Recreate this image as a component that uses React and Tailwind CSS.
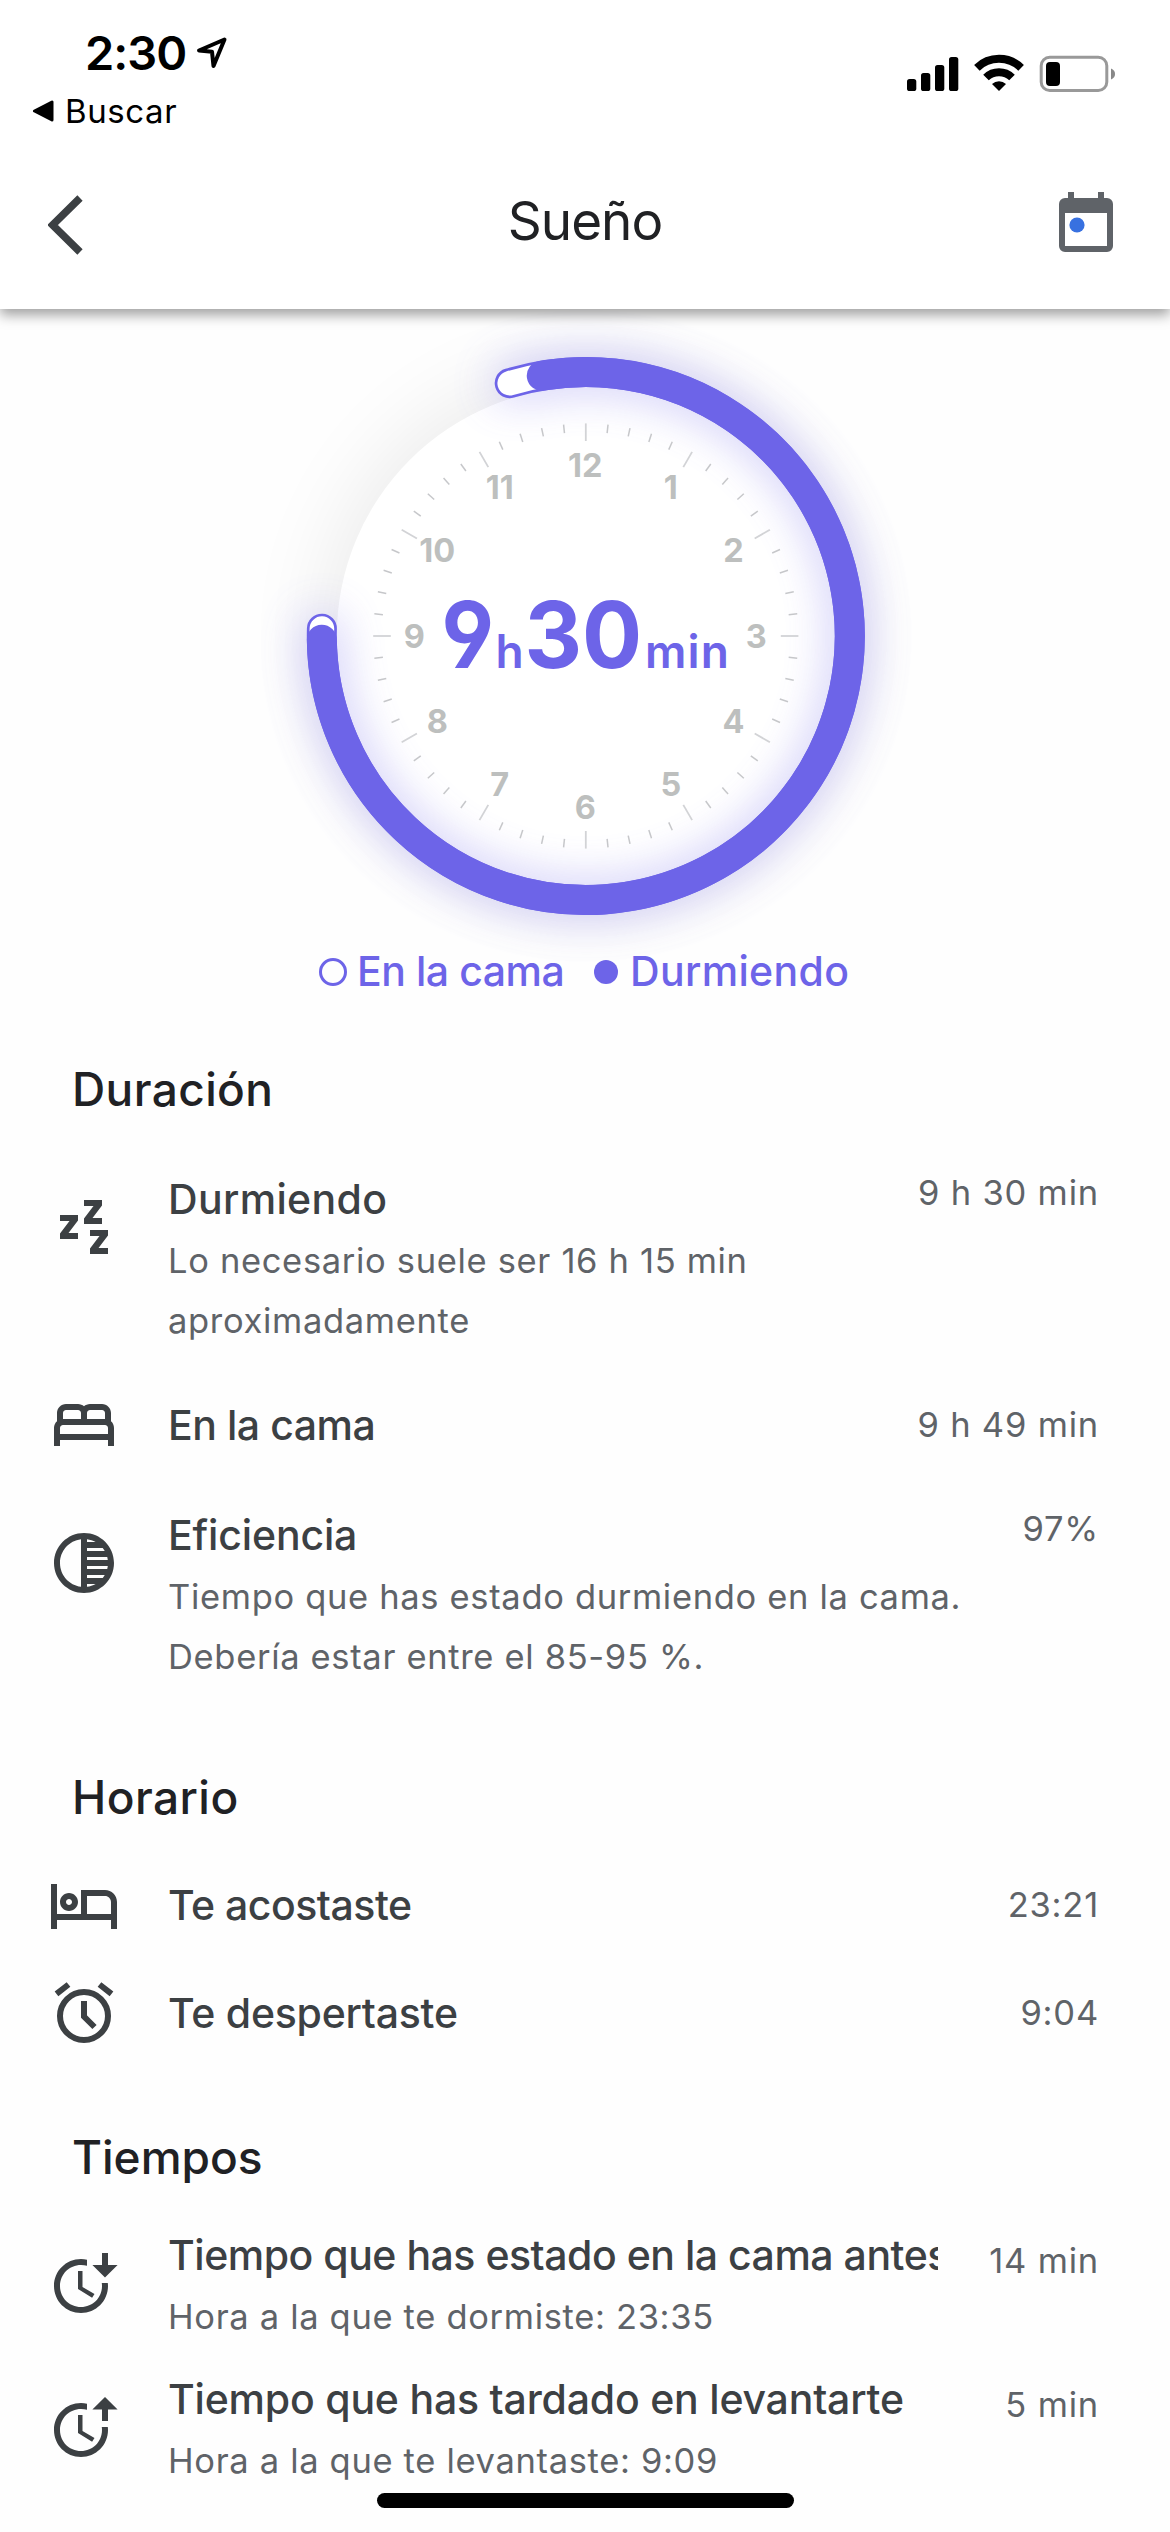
import React from "react";
import { MdOutlineBed, MdTonality, MdOutlineHotel } from "react-icons/md";

const PURPLE = "#6d64e8";
const CX = 585.8;
const CY = 636;

const point = (deg, r) => {
  const a = (deg * Math.PI) / 180;
  return [CX + r * Math.sin(a), CY - r * Math.cos(a)];
};

const arc = (from, to, r) => {
  const [x1, y1] = point(from, r);
  const [x2, y2] = point(to, r);
  return `M${x1} ${y1}A${r} ${r} 0 1 1 ${x2} ${y2}`;
};

const IN_BED = arc(-16.75, 271.6, 264);
const ASLEEP = arc(-9.6, 269.2, 264);

function StatusBar() {
  return (
    <div className="flex h-[131px] justify-between pt-[29px]">
      <div>
        <div className="flex h-12 items-center pl-[85px]">
          <span className="text-[47px] leading-[48px] font-semibold tracking-[-1px]">2:30</span>
          <svg viewBox="0 0 34 36" className="ml-[8px] h-9 w-[34px]">
            <path d="M30.5 4.5 5 15.5l13 1.2 1.5 14.3Z" fill="none" stroke="#000" strokeWidth="4" strokeLinejoin="round" />
          </svg>
        </div>
        <div className="mt-[14px] flex h-10 items-center pl-[32px]">
          <svg viewBox="0 0 22 22" className="h-[22px] w-[22px]">
            <path d="M20 2v18L2.5 11Z" fill="#000" stroke="#000" strokeWidth="3" strokeLinejoin="round" />
          </svg>
          <span className="ml-[11px] text-[33px] leading-10 tracking-[0.6px]">Buscar</span>
        </div>
      </div>
      <svg viewBox="900 50 220 48" className="mt-[21px] mr-[50px] h-12 w-[220px]">
        <rect x="907" y="79" width="9.3" height="12" rx="2.6" />
        <rect x="921" y="73" width="9.3" height="18" rx="2.6" />
        <rect x="935" y="65" width="9.3" height="26" rx="2.6" />
        <rect x="949" y="57" width="9.3" height="34" rx="2.6" />
        <path d="M976.9 67.8a31.7 31.7 0 0 1 44.2 0" fill="none" stroke="#000" strokeWidth="8" />
        <path d="M986 77.5a18.6 18.6 0 0 1 26 0" fill="none" stroke="#000" strokeWidth="8" />
        <path d="M992 84a10.5 10.5 0 0 1 14 0l-7 7Z" />
        <rect x="1041.2" y="57.2" width="65.6" height="33.3" rx="8.5" fill="none" stroke="#999" strokeWidth="3" />
        <rect x="1046" y="62" width="14" height="24" rx="4" />
        <path d="M1111 68.5c5.4 2 5.4 9 0 11Z" fill="#888" />
      </svg>
    </div>
  );
}

function Header() {
  return (
    <header className="relative z-10 h-[309px] bg-white shadow-[0_6px_12px_rgba(0,0,0,0.37)]">
      <StatusBar />
      <div className="grid grid-cols-3 items-start">
        <svg viewBox="0 0 36 60" className="mt-[64px] ml-[48px] h-[60px] w-9">
          <path d="M32 3 4.5 30 32 57" fill="none" stroke="#3c4043" strokeWidth="7.5" />
        </svg>
        <h1 className="mt-[58px] text-center text-[53px] leading-[64px] tracking-[-1px] text-[#202124]">Sueño</h1>
        <svg viewBox="0 0 54 60" className="mt-[61px] mr-[57px] h-[60px] w-[54px] justify-self-end">
          <path
            fillRule="evenodd"
            d="M9 0h6v6h24V0h6v6h3a6 6 0 0 1 6 6v42a6 6 0 0 1-6 6H6a6 6 0 0 1-6-6V12a6 6 0 0 1 6-6h3ZM6 21v33h42V21Z"
            fill="#5f6368"
          />
          <circle cx="18" cy="33" r="7.6" fill="#3871e0" />
        </svg>
      </div>
    </header>
  );
}

function Dial() {
  return (
    <svg viewBox="0 309 1170 638" className="block h-[638px] w-full overflow-visible">
      <defs>
        <filter id="soft" filterUnits="userSpaceOnUse" x="0" y="0" width="1170" height="1300">
          <feGaussianBlur stdDeviation="42" />
        </filter>
        <filter id="glow" filterUnits="userSpaceOnUse" x="0" y="0" width="1170" height="1300">
          <feGaussianBlur stdDeviation="23" />
        </filter>
      </defs>
      <circle cx={CX} cy={CY} r="262" fill="#000" opacity="0.075" filter="url(#soft)" />
      <circle cx={CX} cy={CY} r="249" fill="#fff" />
      <path d={IN_BED} fill="none" stroke={PURPLE} strokeWidth="30" strokeLinecap="round" opacity="0.4" filter="url(#glow)" />
      <path d={IN_BED} fill="none" stroke={PURPLE} strokeWidth="30" strokeLinecap="round" />
      <path d={IN_BED} fill="none" stroke="#fff" strokeWidth="24.6" strokeLinecap="round" />
      <path d={ASLEEP} fill="none" stroke={PURPLE} strokeWidth="30" strokeLinecap="round" />
      {Array.from({ length: 60 }, (_, i) => {
        const major = i % 5 === 0;
        const [x1, y1] = point(i * 6, 212.6);
        const [x2, y2] = point(i * 6, major ? 195 : 204);
        return <line key={i} x1={x1} y1={y1} x2={x2} y2={y2} stroke={major ? "#d2d3d6" : "#c6c7ca"} strokeWidth={major ? 1.8 : 1.5} />;
      })}
      {Array.from({ length: 12 }, (_, i) => {
        const [x, y] = point((i + 1) * 30, 171);
        return (
          <text key={i} x={x - 0.5} y={y + 11.5} textAnchor="middle" fill="#bdbfbe" className="font-[Inter] text-[32.5px] font-bold">
            {i + 1}
          </text>
        );
      })}
      <g fill={PURPLE} className="font-[Inter] font-semibold [font-feature-settings:'cv04']">
        <text transform="translate(441.5 667.5) scale(0.93 1)" className="text-[92px] font-bold">9</text>
        <text x="495.5" y="667.5" className="text-[46px]">h</text>
        <text transform="translate(524.5 667.5) scale(0.97 1)" className="text-[92px] font-bold">30</text>
        <text x="645" y="667.5" className="text-[46px] tracking-[1.1px]">min</text>
      </g>
    </svg>
  );
}

function Legend() {
  return (
    <div className="relative flex items-center pl-[319px] text-[41px] leading-[48px] font-medium text-[#6d64e8]">
      <span className="mt-[2px] size-[28px] rounded-full border-[3px] border-[#6d64e8]" />
      <span className="ml-[10px] w-[237px] tracking-[-0.45px]">En la cama</span>
      <span className="mt-[2px] size-[24px] rounded-full bg-[#6d64e8]" />
      <span className="ml-[12px] tracking-[0.35px]">Durmiendo</span>
    </div>
  );
}

function SleepIcon() {
  return (
    <svg viewBox="0 0 72 72" className="size-[72px]" fill="#3c4043">
      <path id="zed" d="M12 24h18v5.500l-9.500 12.500H30v6H12v-5.500L21.500 30H12z" />
      <use href="#zed" x="24" y="-15" />
      <use href="#zed" x="30" y="15" />
    </svg>
  );
}

function AlarmIcon() {
  return (
    <svg viewBox="0 0 72 72" className="size-[72px]" fill="none" stroke="#3c4043" strokeWidth="6">
      <circle cx="36" cy="39" r="24" />
      <path d="M36 24v15.500l10.500 10.500M8.500 16.800 20.500 7.500M63.500 16.800 51.500 7.500" />
    </svg>
  );
}

function ClockArrowIcon({ up }) {
  return (
    <svg viewBox="0 0 24 24" className="size-[72px] overflow-visible" fill="#3c4043">
      <path d="M10 8v6l4.700 2.900.8-1.200-4-2.400V8z" />
      <path d="M17.920 12c.05.330.08.660.08 1 0 3.900-3.100 7-7 7s-7-3.100-7-7 3.100-7 7-7c.7 0 1.370.1 2 .290V4.230c-.640-.150-1.310-.230-2-.230-5 0-9 4-9 9s4 9 9 9 9-4 9-9c0-.340-.020-.670-.060-1z" />
      <path d={up ? "M19 2l4.200 4.200H20V10h-2V6.200h-3.200z" : "M18 2h2v4h3.200L19 10.200 14.800 6H18z"} />
    </svg>
  );
}

function Heading({ children, className }) {
  return <h2 className={`pl-[72px] text-[46px] leading-[56px] font-medium text-[#202124] ${className}`}>{children}</h2>;
}

const VALUE = "shrink-0 text-right text-[34.5px] leading-[60px] tracking-[0.8px] text-[#5f6368]";
const TITLE = "overflow-hidden text-[41px] leading-[50px] font-medium whitespace-nowrap text-[#3c4043]";
const SUB = "mt-[7px] text-[34.5px] leading-[60px] tracking-[0.67px] text-[#5f6368]";

function SimpleRow({ icon, title, value, tracking, className }) {
  return (
    <div className={`flex h-[72px] items-center pr-[71px] pl-[48px] ${className}`}>
      {icon}
      <span className={`ml-[48px] flex-1 ${TITLE} ${tracking}`}>{title}</span>
      <span className={VALUE}>{value}</span>
    </div>
  );
}

function DetailRow({ icon, title, sub, value, className }) {
  return (
    <div className={`flex items-start pr-[71px] pl-[48px] ${className}`}>
      <div className="pt-[28px]">{icon}</div>
      <div className="ml-[48px] w-[800px] pt-[11px]">
        <div className={TITLE}>{title}</div>
        <p className={SUB}>{sub}</p>
      </div>
      <span className={`ml-auto ${VALUE}`}>{value}</span>
    </div>
  );
}

function TimeRow({ icon, title, sub, value, tracking, className }) {
  return (
    <div className={`flex items-start pr-[71px] pl-[48px] ${className}`}>
      <div className="pt-[17px]">{icon}</div>
      <div className="ml-[48px] w-[770px]">
        <div className={`${TITLE} ${tracking}`}>{title}</div>
        <p className={SUB}>{sub}</p>
      </div>
      <span className={`ml-auto pt-[1px] ${VALUE}`}>{value}</span>
    </div>
  );
}

export default function App() {
  return (
    <div className="flex h-[2532px] w-[1170px] flex-col overflow-hidden bg-[#fefefe] font-[Inter,sans-serif] text-black">
      <Header />
      <main>
        <Dial />
        <Legend />

        <Heading className="mt-[66px] tracking-[0.4px]">Duración</Heading>
        <DetailRow
          className="mt-[46px] tracking-[0.35px]"
          icon={<SleepIcon />}
          title="Durmiendo"
          sub="Lo necesario suele ser 16 h 15 min aproximadamente"
          value="9 h 30 min"
        />
        <SimpleRow
          className="mt-[38px]"
          icon={<MdOutlineBed className="size-[72px] text-[#3c4043]" />}
          title="En la cama"
          tracking="tracking-[-0.45px]"
          value="9 h 49 min"
        />
        <DetailRow
          className="mt-[38px] tracking-[-0.15px]"
          icon={<MdTonality className="size-[72px] text-[#3c4043]" />}
          title="Eficiencia"
          sub="Tiempo que has estado durmiendo en la cama. Debería estar entre el 85-95 %."
          value="97%"
        />

        <Heading className="mt-[82px] tracking-[0.45px]">Horario</Heading>
        <SimpleRow
          className="mt-[44px]"
          icon={<MdOutlineHotel className="size-[72px] text-[#3c4043]" />}
          title="Te acostaste"
          tracking="tracking-[-0.5px]"
          value="23:21"
        />
        <SimpleRow
          className="mt-[36px]"
          icon={<AlarmIcon />}
          title="Te despertaste"
          tracking="tracking-[-0.25px]"
          value="9:04"
        />

        <Heading className="mt-[80px]">Tiempos</Heading>
        <TimeRow
          className="mt-[45px]"
          icon={<ClockArrowIcon />}
          title="Tiempo que has estado en la cama antes"
          tracking="tracking-[-0.48px]"
          sub="Hora a la que te dormiste: 23:35"
          value="14 min"
        />
        <TimeRow
          className="mt-[27px]"
          icon={<ClockArrowIcon up />}
          title="Tiempo que has tardado en levantarte"
          tracking="tracking-[-0.2px]"
          sub="Hora a la que te levantaste: 9:09"
          value="5 min"
        />
      </main>
      <div className="mt-[2px] h-[15px] w-[417px] shrink-0 self-center rounded-full bg-black" />
    </div>
  );
}
